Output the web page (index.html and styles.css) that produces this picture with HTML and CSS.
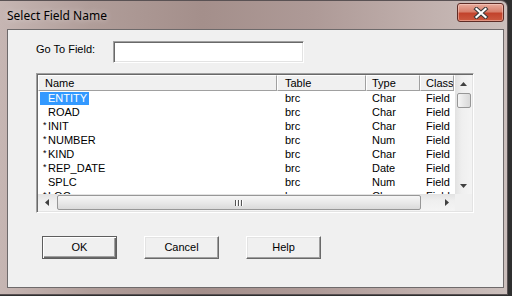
FILE: index.html
```html
<!DOCTYPE html>
<html>
<head>
    <title>Select Field Name</title>
    <link rel="stylesheet" href="styles.css">
</head>
<body>
    <div class="window">
        <div class="titlebar">
            <div class="title">Select Field Name</div>
            <div class="close">
                <svg width="16" height="12" viewBox="0 0 16 12">
                    <path d="M3.5 2 L12.5 10 M12.5 2 L3.5 10" stroke="#3b3b3b" stroke-width="4.2" stroke-linecap="square"/>
                    <path d="M3.5 2 L12.5 10 M12.5 2 L3.5 10" stroke="#ffffff" stroke-width="2.2" stroke-linecap="square"/>
                </svg>
            </div>
        </div>
        <div class="client">
            <div class="goto">
                <label class="goto-label">Go To Field:</label>
                <div class="field"></div>
            </div>

            <div class="listbox">
                <div class="list">
                    <div class="head">
                        <div class="hc c-name">Name</div>
                        <div class="hc c-table">Table</div>
                        <div class="hc c-type">Type</div>
                        <div class="hc c-class">Class</div>
                    </div>
                    <div class="rows">
                        <div class="row">
                            <div class="c-name"><span class="nm sel"><span class="mk"></span>ENTITY</span></div>
                            <div class="c-table">brc</div><div class="c-type">Char</div><div class="c-class">Field</div>
                        </div>
                        <div class="row">
                            <div class="c-name"><span class="nm"><span class="mk"></span>ROAD</span></div>
                            <div class="c-table">brc</div><div class="c-type">Char</div><div class="c-class">Field</div>
                        </div>
                        <div class="row">
                            <div class="c-name"><span class="nm"><span class="mk">*</span>INIT</span></div>
                            <div class="c-table">brc</div><div class="c-type">Char</div><div class="c-class">Field</div>
                        </div>
                        <div class="row">
                            <div class="c-name"><span class="nm"><span class="mk">*</span>NUMBER</span></div>
                            <div class="c-table">brc</div><div class="c-type">Num</div><div class="c-class">Field</div>
                        </div>
                        <div class="row">
                            <div class="c-name"><span class="nm"><span class="mk">*</span>KIND</span></div>
                            <div class="c-table">brc</div><div class="c-type">Char</div><div class="c-class">Field</div>
                        </div>
                        <div class="row">
                            <div class="c-name"><span class="nm"><span class="mk">*</span>REP_DATE</span></div>
                            <div class="c-table">brc</div><div class="c-type">Date</div><div class="c-class">Field</div>
                        </div>
                        <div class="row">
                            <div class="c-name"><span class="nm"><span class="mk"></span>SPLC</span></div>
                            <div class="c-table">brc</div><div class="c-type">Num</div><div class="c-class">Field</div>
                        </div>
                        <div class="row">
                            <div class="c-name"><span class="nm"><span class="mk">*</span>LOC</span></div>
                            <div class="c-table">brc</div><div class="c-type">Char</div><div class="c-class">Field</div>
                        </div>
                    </div>
                </div>

                <div class="vscroll">
                    <div class="arrow">
                        <svg width="7" height="4" viewBox="0 0 7 4"><path d="M3.5 0 L7 4 L0 4 Z" fill="#404040"/></svg>
                    </div>
                    <div class="vthumb"></div>
                    <div class="track"></div>
                    <div class="arrow">
                        <svg width="7" height="4" viewBox="0 0 7 4"><path d="M0 0 L7 0 L3.5 4 Z" fill="#404040"/></svg>
                    </div>
                </div>

                <div class="hscroll">
                    <div class="arrow">
                        <svg width="4" height="7" viewBox="0 0 4 7"><path d="M0 3.5 L4 0 L4 7 Z" fill="#404040"/></svg>
                    </div>
                    <div class="hthumb"><span class="grip"></span><span class="grip"></span><span class="grip"></span></div>
                    <div class="track"></div>
                    <div class="arrow">
                        <svg width="4" height="7" viewBox="0 0 4 7"><path d="M0 0 L4 3.5 L0 7 Z" fill="#404040"/></svg>
                    </div>
                </div>

                <div class="corner"></div>
            </div>

            <div class="buttons">
                <div class="btn default">OK</div>
                <div class="btn">Cancel</div>
                <div class="btn">Help</div>
            </div>
        </div>
    </div>
</body>
</html>
```

FILE: styles.css
```css
body {
    margin: 0;
    background-color: #2f2f2f;
    font-family: "Liberation Sans", Arial, sans-serif;
    font-size: 11px;
    color: #000;
}

.window {
    box-sizing: border-box;
    width: 508px;
    height: 295px;
    display: flex;
    flex-direction: column;
    border: 1px solid #5a5254;
    border-left: none;
    border-radius: 0 7px 0 0;
    background: linear-gradient(90deg, #c6b6b3 0%, #b09d99 18%, #a48f8b 40%, #ae9a97 62%, #bfaeab 82%, #cbbfbc 100%);
}

.titlebar {
    height: 28px;
    display: flex;
    align-items: flex-start;
}
.title {
    padding: 7px 0 0 7px;
    font-family: "Noto Sans", sans-serif;
    font-size: 12px;
    line-height: 16px;
    color: #000;
    text-shadow: 0 0 6px rgba(255, 255, 255, 0.6);
}
.close {
    box-sizing: border-box;
    width: 47px;
    height: 19px;
    margin: 2px 3px 0 auto;
    border: 1px solid #5e2c26;
    border-radius: 3px;
    background: linear-gradient(#e8ab9c 0%, #d8806c 45%, #c2432c 55%, #cc5a40 100%);
    box-shadow: inset 0 0 0 1px rgba(255, 220, 210, 0.45);
    display: flex;
    align-items: center;
    justify-content: center;
}

.client {
    flex: 1;
    margin: 0 3px 6px 7px;
    border: 1px solid #6e6a6b;
    background-color: #f0f0f0;
    padding: 11px 0 0 28px;
}

.goto {
    display: flex;
    align-items: flex-start;
    height: 22px;
}
.goto-label {
    width: 77px;
    padding-top: 1px;
    line-height: 14px;
}
.field {
    box-sizing: border-box;
    width: 191px;
    height: 22px;
    background-color: #fff;
    border: 1px solid;
    border-color: #a0a0a0 #fff #fff #a0a0a0;
    box-shadow: inset 1px 1px #696969, inset -1px -1px #e3e3e3;
}

.listbox {
    box-sizing: border-box;
    width: 438px;
    height: 140px;
    margin-top: 10px;
    background-color: #fff;
    border: 1px solid;
    border-color: #a0a0a0 #fff #fff #a0a0a0;
    padding: 1px;
    box-shadow: inset 1px 1px #696969, inset -1px -1px #e3e3e3;
    display: grid;
    grid-template-columns: 1fr 17px;
    grid-template-rows: 1fr 17px;
}

.list {
    overflow: hidden;
    display: flex;
    flex-direction: column;
}
.head, .row {
    display: grid;
    grid-template-columns: 239px 89px 54px 34px;
}
.head {
    height: 16px;
    flex-shrink: 0;
}
.hc {
    box-sizing: border-box;
    background-color: #f0f0f0;
    border-top: 1px solid #fff;
    border-left: 1px solid #fff;
    border-right: 1px solid #a0a0a0;
    border-bottom: 1px solid #a0a0a0;
    line-height: 14px;
    padding-left: 6px;
    white-space: nowrap;
    overflow: hidden;
}
.hc.c-name { padding-left: 6px; }
.hc.c-table { padding-left: 7px; }
.hc.c-type, .hc.c-class { padding-left: 5px; }

.rows {
    flex: 1;
    overflow: hidden;
}
.row {
    height: 14px;
    line-height: 14px;
    white-space: nowrap;
}
.row > div {
    overflow: hidden;
}
.row .c-name { padding-left: 2px; }
.row .c-table { padding-left: 8px; }
.row .c-type, .row .c-class { padding-left: 6px; }

.nm {
    display: inline-block;
    padding-right: 2px;
}
.mk {
    display: inline-block;
    width: 8px;
    box-sizing: border-box;
    padding-left: 3px;
    font-size: 9px;
    vertical-align: top;
    line-height: 12px;
}
.sel {
    background-color: #3399ff;
    color: #fff;
    height: 13px;
    line-height: 13px;
    margin-top: 1px;
    vertical-align: top;
}

.vscroll {
    display: flex;
    flex-direction: column;
    background: linear-gradient(90deg, #e2e2e2, #efefef 40%, #f4f4f4);
}
.hscroll {
    display: flex;
    background: linear-gradient(#e2e2e2, #efefef 40%, #f4f4f4);
}
.arrow {
    width: 17px;
    height: 17px;
    flex-shrink: 0;
    display: flex;
    align-items: center;
    justify-content: center;
}
.track {
    flex: 1;
}
.vthumb {
    box-sizing: border-box;
    height: 15px;
    margin: 1px 1px 0 2px;
    border: 1px solid #979797;
    border-radius: 2px;
    background: linear-gradient(90deg, #f6f6f6, #e6e6e6 50%, #d9d9d9);
}
.hthumb {
    box-sizing: border-box;
    width: 364px;
    margin: 1px 0 1px 2px;
    border: 1px solid #979797;
    border-radius: 2px;
    background: linear-gradient(#f6f6f6, #e9e9e9 50%, #dadada);
    display: flex;
    align-items: center;
    justify-content: center;
    gap: 1px;
}
.grip {
    width: 1px;
    height: 6px;
    background-color: #555;
    border-right: 1px solid #fff;
}
.corner {
    background-color: #f0f0f0;
}

.buttons {
    display: flex;
    gap: 27px;
    margin-top: 23px;
    padding-left: 6px;
}
.btn {
    box-sizing: border-box;
    width: 75px;
    height: 23px;
    line-height: 21px;
    text-align: center;
    background-color: #f0f0f0;
    border: 1px solid;
    border-color: #fff #696969 #696969 #fff;
    box-shadow: inset -1px -1px #a0a0a0, inset 1px 1px #e3e3e3;
}
.btn.default {
    border-color: #5e5e5e;
    box-shadow: inset 1px 1px #fff, inset -1px -1px #696969, inset -2px -2px #a0a0a0;
}
```
